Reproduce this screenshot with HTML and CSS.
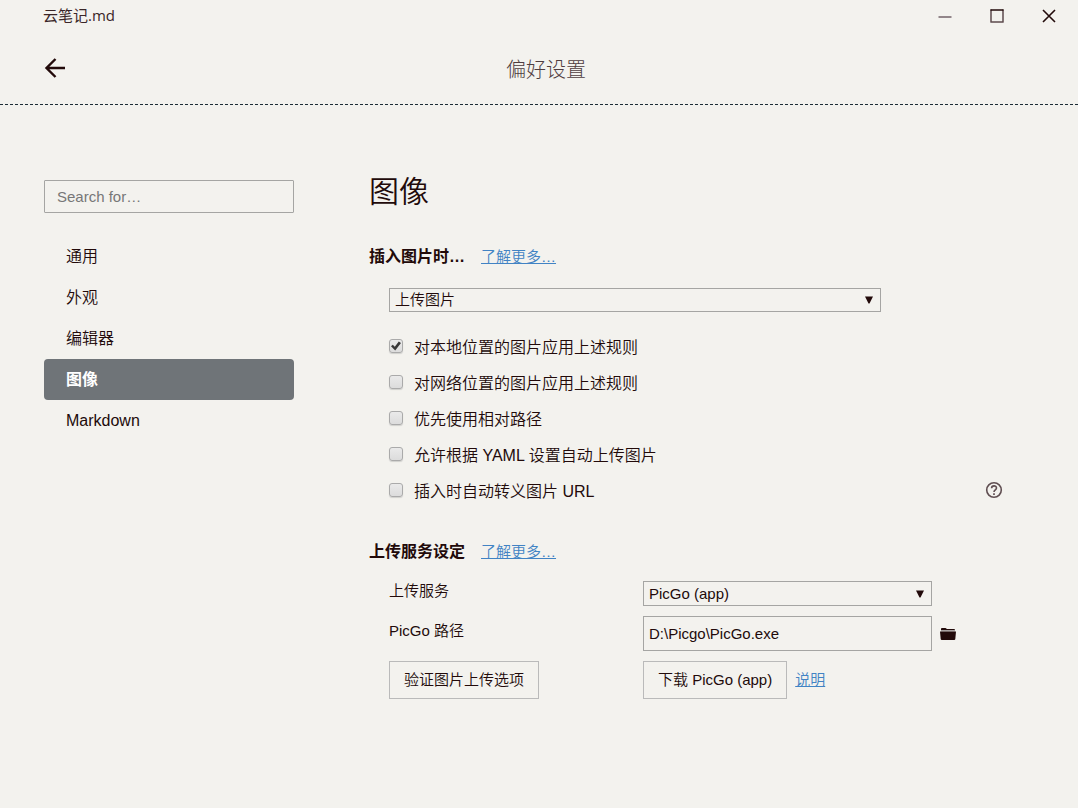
FILE: index.html
```html
<!DOCTYPE html>
<html lang="zh-CN">
<head>
<meta charset="utf-8">
<meta name="viewport" content="width=device-width, initial-scale=1">
<title>偏好设置</title>
<link rel="stylesheet" href="styles.css">
</head>
<body>
<div class="titlebar">
  <span class="file-name">云笔记.md</span>
  <div class="window-controls">
    <button class="window-button" type="button" aria-label="最小化"><svg width="14" height="14" viewBox="0 0 14 14"><path d="M0.5 8H13.500" stroke="#92868a" stroke-width="2"/></svg></button>
    <button class="window-button" type="button" aria-label="最大化"><svg width="14" height="14" viewBox="0 0 14 14"><path d="M1 .5V13.500M13 .5V13.500M0.500 13H13.500" stroke="#5d4b4e" stroke-width="1.500"/><path d="M.5 1H13.500" stroke="#220a0a" stroke-width="1.500"/></svg></button>
    <button class="window-button" type="button" aria-label="关闭"><svg width="14" height="14" viewBox="0 0 14 14"><path d="M1 1L13 13M13 1L1 13" stroke="#220a0a" stroke-width="1.600"/></svg></button>
  </div>
</div>
<header class="header">
  <button class="back" type="button" aria-label="返回"><svg width="22" height="22" viewBox="0 0 22 22"><path d="M21 11H3M11.500 2L2.500 11L11.500 20" fill="none" stroke="#220a0a" stroke-width="2.400"/></svg></button>
  <div class="header-title">偏好设置</div>
</header>
<div class="layout">
  <aside class="sidebar">
    <input class="search" type="search" placeholder="Search for…" aria-label="Search">
    <nav class="nav">
      <a class="nav-item" href="#general">通用</a>
      <a class="nav-item" href="#appearance">外观</a>
      <a class="nav-item" href="#editor">编辑器</a>
      <a class="nav-item active" href="#image" aria-current="page">图像</a>
      <a class="nav-item" href="#markdown">Markdown</a>
    </nav>
  </aside>
  <main class="content">
    <h1 class="page-title">图像</h1>
    <section class="section">
      <div class="section-head">
        <h2 class="section-title" id="insert-title">插入图片时…</h2>
        <a class="link" href="#insert-help">了解更多…</a>
      </div>
      <div class="section-body">
        <div class="select-box wide">
          <select class="select" aria-labelledby="insert-title"><option>上传图片</option></select>
          <svg class="caret" width="8" height="8" viewBox="0 0 8 8" aria-hidden="true"><path d="M0 .5H8L4.500 7.500H3.500Z" fill="#220a0a"/></svg>
        </div>
        <div class="options">
          <label class="option"><input class="check" type="checkbox" checked><span>对本地位置的图片应用上述规则</span></label>
          <label class="option"><input class="check" type="checkbox"><span>对网络位置的图片应用上述规则</span></label>
          <label class="option"><input class="check" type="checkbox"><span>优先使用相对路径</span></label>
          <label class="option"><input class="check" type="checkbox"><span>允许根据 YAML 设置自动上传图片</span></label>
          <div class="option-row">
            <label class="option"><input class="check" type="checkbox"><span>插入时自动转义图片 URL</span></label>
            <button class="help" type="button" aria-label="帮助"><svg width="18" height="18" viewBox="0 0 18 18" fill="none" stroke="#604f52"><circle cx="9" cy="9" r="7.300" stroke-width="1.600"/><path d="M6.600 7.300C6.600 4 11.500 4.100 11.500 7.100C11.500 8.800 9 9 9 11" stroke-width="1.600"/><path d="M9 12.200V13.900" stroke-width="1.700"/></svg></button>
          </div>
        </div>
      </div>
    </section>
    <section class="section">
      <div class="section-head">
        <h2 class="section-title">上传服务设定</h2>
        <a class="link" href="#upload-help">了解更多…</a>
      </div>
      <div class="section-body form">
        <label class="field-label" for="service">上传服务</label>
        <div class="select-box">
          <select class="select" id="service"><option>PicGo (app)</option></select>
          <svg class="caret" width="8" height="8" viewBox="0 0 8 8" aria-hidden="true"><path d="M0 .5H8L4.500 7.500H3.500Z" fill="#220a0a"/></svg>
        </div>
        <label class="field-label path-label" for="path">PicGo 路径</label>
        <input class="path" id="path" type="text" value="D:\Picgo\PicGo.exe">
        <button class="folder" type="button" aria-label="选择文件"><svg width="16" height="12" viewBox="0 0 16 12"><path d="M1 2V.8Q1 0 2 0H5.500L7 1H14Q15 1 15 2V2.200H1Z" fill="#220a0a"/><path d="M1 2.200H15V3.500H1Z" fill="#a39b9b"/><path d="M0 3.500H16L15.300 11Q15.200 12 14.200 12H1.800Q.8 12 .7 11Z" fill="#220a0a"/></svg></button>
        <div class="verify"><button class="button" type="button">验证图片上传选项</button></div>
        <div class="actions">
          <button class="button" type="button">下载 PicGo (app)</button>
          <a class="link" href="#picgo-help">说明</a>
        </div>
      </div>
    </section>
  </main>
</div>
</body>
</html>
```
FILE: styles.css
```css
* {
  box-sizing: border-box;
}

body {
  margin: 0;
  background: #f3f2ee;
  color: #220a0a;
  font-family: "Liberation Sans", "Noto Sans CJK SC", sans-serif;
  font-size: 16px;
  font-weight: 350;
  line-height: 24px;
}

button,
input,
select {
  margin: 0;
  color: inherit;
  font: inherit;
}

button {
  border: 0;
  padding: 0;
  background: none;
}

svg {
  display: block;
}

.titlebar {
  display: flex;
  justify-content: space-between;
  height: 32px;
  padding-left: 43px;
  color: #3a2628;
  font-family: "Open Sans", "Noto Sans CJK SC", sans-serif;
  font-size: 15px;
  line-height: 30px;
}

.file-name {
  font-weight: 400;
}

.window-controls {
  display: flex;
  padding-right: 3px;
}

.window-button {
  display: grid;
  place-items: center;
  width: 52px;
  height: 32px;
}

.header {
  display: grid;
  grid-template-columns: 66px 1fr 52px;
  align-items: center;
  height: 73px;
  border-bottom: 1px dashed #1c2c36;
}

.back {
  justify-self: end;
}

.header-title {
  padding-top: 4px;
  color: #4f3d3f;
  font-size: 20px;
  font-weight: 300;
  text-align: center;
}

.layout {
  display: grid;
  grid-template-columns: 250px minmax(0, 634px);
  column-gap: 75px;
  padding: 75px 44px 48px;
}

.search {
  display: block;
  width: 100%;
  height: 33px;
  padding: 0 12px;
  border: 1px solid #a5a5a3;
  border-radius: 1px;
  background: transparent;
  font-size: 15px;
  appearance: none;
}

.search::placeholder {
  color: #777;
}

.nav {
  display: flex;
  flex-direction: column;
  margin-top: 23px;
}

.nav-item {
  padding: 0 22px;
  border-radius: 4px;
  color: inherit;
  line-height: 41px;
  text-decoration: none;
}

.nav-item.active {
  background: #6f7478;
  color: #fff;
  font-weight: 700;
}

.page-title {
  margin: 0 0 41px;
  font-size: 30px;
  font-weight: 350;
  line-height: 24px;
}

.section + .section {
  margin-top: 36px;
}

.section-head {
  display: flex;
  gap: 16px;
}

.section-title {
  margin: 0;
  font-size: 16px;
  font-weight: 700;
  line-height: 24px;
}

.link {
  color: #4183c4;
  font-size: 15px;
}

.section-body {
  padding: 19px 0 0 20px;
}

.select-box {
  display: grid;
  align-items: center;
  height: 24px;
  font-size: 15px;
}

.wide {
  max-width: 492px;
}

.select,
.caret {
  grid-area: 1 / 1;
}

.select {
  width: 100%;
  height: 24px;
  padding: 0 24px 0 5px;
  border: 1px solid #a5a5a3;
  border-radius: 0;
  background: transparent;
  line-height: 22px;
  appearance: none;
}

.caret {
  justify-self: end;
  margin-right: 8px;
  pointer-events: none;
}

.options {
  display: grid;
  gap: 12px;
  padding-top: 24px;
}

.option {
  display: flex;
  align-items: center;
  gap: 11px;
}

.option-row {
  display: flex;
  justify-content: space-between;
  align-items: center;
}

.help {
  margin-bottom: 4px;
}

.check {
  display: grid;
  place-items: center;
  width: 14px;
  height: 14px;
  margin-bottom: 4px;
  border: 1px solid #aaa;
  border-radius: 3px;
  background: linear-gradient(#eaeaea, #dcdcdc);
  box-shadow: 0 1px 1px #d0d0cd;
  appearance: none;
}

.check:checked::before {
  content: "";
  width: 10px;
  height: 10px;
  background: #383838;
  clip-path: polygon(0 52%, 18% 38%, 38% 58%, 78% 5%, 100% 20%, 42% 95%);
}

.form {
  display: grid;
  grid-template-columns: 254px minmax(0, 289px) 24px;
  row-gap: 10px;
  padding-top: 17px;
  font-size: 15px;
}

.field-label {
  grid-column: 1;
  line-height: 20px;
}

.path-label {
  line-height: 30px;
}

.form .select-box,
.form .select {
  height: 25px;
}

.path {
  width: 100%;
  height: 35px;
  padding: 0 5px;
  border: 1px solid #a5a5a3;
  background: transparent;
}

.folder {
  align-self: center;
  justify-self: end;
}

.verify {
  grid-column: 1;
}

.button {
  height: 38px;
  padding: 0 14px;
  border: 1px solid #bababa;
  white-space: nowrap;
}

.actions {
  display: flex;
  align-items: center;
  gap: 8px;
}
```
